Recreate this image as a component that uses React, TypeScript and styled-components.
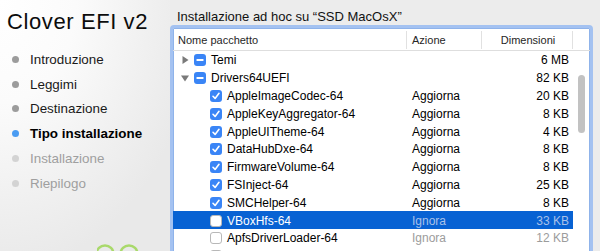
import styled, {createGlobalStyle, css} from "styled-components";

type Row = {
    name: string,
    size: string,
    group?: boolean,
    open?: boolean,
    action?: string,
    checked?: boolean,
    selected?: boolean,
}

const steps = [
    {label: 'Introduzione', state: 'done'},
    {label: 'Leggimi', state: 'done'},
    {label: 'Destinazione', state: 'done'},
    {label: 'Tipo installazione', state: 'current'},
    {label: 'Installazione', state: 'todo'},
    {label: 'Riepilogo', state: 'todo'},
] as const

const rows: Row[] = [
    {name: 'Temi', size: '6 MB', group: true, open: false},
    {name: 'Drivers64UEFI', size: '82 KB', group: true, open: true},
    {name: 'AppleImageCodec-64', action: 'Aggiorna', size: '20 KB', checked: true},
    {name: 'AppleKeyAggregator-64', action: 'Aggiorna', size: '8 KB', checked: true},
    {name: 'AppleUITheme-64', action: 'Aggiorna', size: '4 KB', checked: true},
    {name: 'DataHubDxe-64', action: 'Aggiorna', size: '8 KB', checked: true},
    {name: 'FirmwareVolume-64', action: 'Aggiorna', size: '8 KB', checked: true},
    {name: 'FSInject-64', action: 'Aggiorna', size: '25 KB', checked: true},
    {name: 'SMCHelper-64', action: 'Aggiorna', size: '8 KB', checked: true},
    {name: 'VBoxHfs-64', action: 'Ignora', size: '33 KB', checked: false, selected: true},
    {name: 'ApfsDriverLoader-64', action: 'Ignora', size: '12 KB', checked: false},
    // only the top edge of this row's checkbox shows in the window
    {name: '', action: '', size: '', checked: false},
]

function Triangle({open}: {open?: boolean}) {
    return (
        <TriangleBox width="8" height="8" viewBox="0 0 8 8">
            {open
                ? <path d="M0 1.5 L8 1.5 L4 7.5 Z" fill="#7a7a7a"/>
                : <path d="M1.5 0 L7.5 4 L1.5 8 Z" fill="#7a7a7a"/>}
        </TriangleBox>
    )
}

function Box({checked, mixed}: {checked?: boolean, mixed?: boolean}) {
    return (
        <CheckBox on={checked || mixed}>
            {mixed && <svg width="12" height="12" viewBox="0 0 12 12"><rect x="2.5" y="5" width="7" height="2" rx="0.5" fill="#fff"/></svg>}
            {checked && !mixed && <svg width="12" height="12" viewBox="0 0 12 12"><path d="M3 6.3 L5.1 8.4 L9 3.3" stroke="#fff" strokeWidth="1.6" fill="none" strokeLinecap="round" strokeLinejoin="round"/></svg>}
        </CheckBox>
    )
}

function App() {
    return (
        <>
            <GlobalStyle/>
            <Window>
                <Sidebar>
                    <Title>Clover EFI v2</Title>
                    <Steps>
                        {steps.map(s => (
                            <Step key={s.label} state={s.state}>
                                <Dot state={s.state}/>
                                {s.label}
                            </Step>
                        ))}
                    </Steps>
                    <Logo width="60" height="8" viewBox="0 0 60 8">
                        <circle cx="8" cy="11" r="8.5" fill="none" stroke="#a9d96b" strokeWidth="2.5"/>
                        <circle cx="32" cy="11" r="8.5" fill="none" stroke="#a9d96b" strokeWidth="2.5"/>
                    </Logo>
                </Sidebar>
                <Main>
                    <Heading>Installazione ad hoc su “SSD MacOsX”</Heading>
                    <Table>
                        <Header>
                            <HeadCell>Nome pacchetto</HeadCell>
                            <HeadCell>Azione</HeadCell>
                            <HeadCell center>Dimensioni</HeadCell>
                            <HeadCorner/>
                        </Header>
                        <Body>
                            <Rows>
                                {rows.map((r, i) => (
                                    <TableRow key={i} selected={r.selected}>
                                        <NameCell child={!r.group}>
                                            {r.group && <Triangle open={r.open}/>}
                                            <Box checked={r.checked} mixed={r.group}/>
                                            {r.name && <Label>{r.name}</Label>}
                                        </NameCell>
                                        <ActionCell dim={r.action === 'Ignora'} selected={r.selected}>{r.action}</ActionCell>
                                        <SizeCell dim={r.action === 'Ignora'} selected={r.selected}>{r.size}</SizeCell>
                                    </TableRow>
                                ))}
                            </Rows>
                            <ScrollTrack>
                                <Thumb/>
                            </ScrollTrack>
                        </Body>
                    </Table>
                </Main>
            </Window>
        </>
    )
}

export default App

const GlobalStyle = createGlobalStyle`
    html, body {
        margin: 0;
        padding: 0;
        background: #ececec;
    }
    body {
        font-family: "Liberation Sans", Arial, sans-serif;
        color: #000;
    }
`

const Window = styled.div`
    display: flex;
    width: 600px;
    height: 251px;
    overflow: hidden;
    background: #ececec;
`

const Sidebar = styled.div`
    display: flex;
    flex-direction: column;
    width: 170px;
    height: 251px;
    flex-shrink: 0;
    background: radial-gradient(ellipse 200px 270px at 0 0, #ffffff 0%, #fbfbfb 38%, #f0f0f0 75%, #e9e9e9 100%);
`

const Title = styled.h1`
    margin: 0;
    padding: 9px 0 0 7px;
    font: 400 22px / 26px "Liberation Sans", Arial, sans-serif;
    letter-spacing: 0.6px;
    color: #0c0c0c;
`

const Steps = styled.div`
    display: flex;
    flex-direction: column;
    margin-top: 12px;
`

type StepProps = { state: 'done' | 'current' | 'todo' }

const Step = styled.div<StepProps>`
    display: flex;
    align-items: center;
    gap: 11px;
    height: 24.8px;
    padding-left: 12px;
    font: 400 13.4px "Liberation Sans", Arial, sans-serif;
    color: #1a1a1a;

    ${p => p.state === 'current' && css`
        font-weight: 700;
        color: #000;
    `}

    ${p => p.state === 'todo' && css`
        color: #9f9f9f;
    `}
`

const Dot = styled.span<StepProps>`
    width: 7px;
    height: 7px;
    border-radius: 50%;
    background: ${p => p.state === 'done' ? '#9c9c9c' : p.state === 'current' ? '#4a9cf2' : '#d3d3d3'};
`

const Logo = styled.svg`
    margin-top: auto;
    margin-left: 97px;
    display: block;
`

const Main = styled.div`
    display: flex;
    flex-direction: column;
    flex: 1;
    padding-top: 9px;
`

const Heading = styled.div`
    padding-left: 7px;
    font: 400 13px / 16px "Liberation Sans", Arial, sans-serif;
    color: #111;
    height: 16px;
`

const Table = styled.div`
    width: 417px;
    border: 3px solid #a4c2f1;
    border-radius: 4px;
    box-shadow: inset 0 0 0 1px #8fb3ea;
    background: #fff;
    height: 300px;
`

const Header = styled.div`
    display: flex;
    align-items: center;
    height: 23px;
    padding-top: 1px;
    box-sizing: border-box;
    border-bottom: 1px solid #dedede;
    font: 400 11px "Liberation Sans", Arial, sans-serif;
    color: #262626;
`

const HeadCell = styled.div<{ center?: boolean }>`
    display: flex;
    align-items: center;
    height: 18px;
    padding-left: 5px;
    border-right: 1px solid #e1e1e1;
    box-sizing: border-box;

    &:nth-child(1) { width: 234px; }
    &:nth-child(2) { width: 75px; }
    &:nth-child(3) { width: 91px; }

    ${p => p.center && css`
        justify-content: center;
        padding-left: 2px;
    `}
`

const HeadCorner = styled.div`
    flex: 1;
`

const Body = styled.div`
    display: flex;
`

const Rows = styled.div`
    display: flex;
    flex-direction: column;
    width: 400px;
`

const TableRow = styled.div<{ selected?: boolean }>`
    display: grid;
    grid-template-columns: 234px 75px 91px;
    align-items: center;
    height: 17.8px;
    padding-top: 1px;
    box-sizing: border-box;
    font: 400 12px "Liberation Sans", Arial, sans-serif;
    color: #000;
    background: ${p => p.selected ? '#0862d3' : 'transparent'};

    ${p => p.selected && css`
        color: #fff;
    `}
`

const NameCell = styled.div<{ child?: boolean }>`
    display: flex;
    align-items: center;
    padding-left: ${p => p.child ? '37px' : '8px'};
    white-space: nowrap;
`

const TriangleBox = styled.svg`
    display: block;
    margin-right: 5px;
`

const CheckBox = styled.span<{ on?: boolean }>`
    display: flex;
    width: 12px;
    height: 12px;
    box-sizing: border-box;
    border-radius: 3px;
    background: #fff;
    border: 1px solid #b8b8b8;

    ${p => p.on && css`
        background: #3a85f6;
        border: none;
    `}
`

const Label = styled.span`
    margin-left: 5px;
`

type DimProps = { dim?: boolean, selected?: boolean }

const ActionCell = styled.div<DimProps>`
    padding-left: 5px;
    color: ${p => p.selected ? '#a9c1e9' : p.dim ? '#9c9c9c' : 'inherit'};
`

const SizeCell = styled.div<DimProps>`
    text-align: right;
    padding-right: 4px;
    color: ${p => p.selected ? '#a9c1e9' : p.dim ? '#9c9c9c' : 'inherit'};
`

const ScrollTrack = styled.div`
    width: 17px;
    padding-top: 24px;
    padding-left: 5px;
    box-sizing: border-box;
`

const Thumb = styled.div`
    width: 7px;
    height: 58px;
    border-radius: 4px;
    background: #c2c2c2;
`
